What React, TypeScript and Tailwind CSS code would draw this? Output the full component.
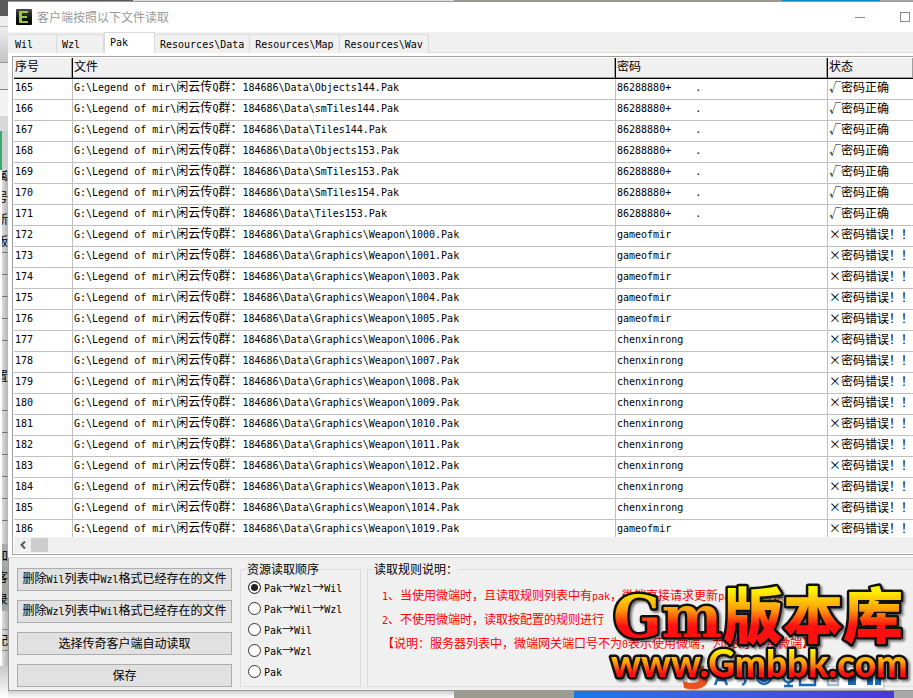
import { useState } from "react";
import clsx from "clsx";

const TABS = ["Wil", "Wzl", "Pak", "Resources\\Data", "Resources\\Map", "Resources\\Wav"];

const ORDERS = ["Pak→Wzl→Wil", "Pak→Wil→Wzl", "Pak→Wil", "Pak→Wzl", "Pak"];

const ACTIONS = [
  "删除Wil列表中Wzl格式已经存在的文件",
  "删除Wzl列表中Wil格式已经存在的文件",
  "选择传奇客户端自动读取",
  "保存",
];

const RULES = [
  "1、当使用微端时，且读取规则列表中有pak，微端直接请求更新pak，不再读",
  "2、不使用微端时，读取按配置的规则进行",
  "【说明：服务器列表中，微端网关端口号不为0表示使用微端，为0表示不用微端】",
];

const ROOT = "G:\\Legend of mir\\闲云传Q群：184686\\Data\\";

type Row = { file: string; password: string; ok: boolean };

const ROWS: Row[] = [
  ...["Objects144", "smTiles144", "Tiles144", "Objects153", "SmTiles153", "SmTiles154", "Tiles153"].map(
    (file) => ({ file, password: "86288880+    .", ok: true }),
  ),
  ...[1000, 1001, 1003, 1004, 1005].map((n) => ({
    file: `Graphics\\Weapon\\${n}`,
    password: "gameofmir",
    ok: false,
  })),
  ...[1006, 1007, 1008, 1009, 1010, 1011, 1012, 1013, 1014].map((n) => ({
    file: `Graphics\\Weapon\\${n}`,
    password: "chenxinrong",
    ok: false,
  })),
  { file: "Graphics\\Weapon\\1019", password: "gameofmir", ok: false },
];

/** 中文 12px，半角字符 10px 等宽（每字 6px），保证中英文 2:1 对齐 */
function Mixed({ children }: { children: string }) {
  const parts = children.match(/[\x20-\x7e]+|[^\x20-\x7e]+/g) ?? [];
  return (
    <>
      {parts.map((part, i) =>
        /[\x20-\x7e]/.test(part) ? (
          <span key={i} className="font-['DejaVu_Sans_Mono','Liberation_Mono',monospace] text-[10px]">
            {part}
          </span>
        ) : (
          part
        ),
      )}
    </>
  );
}

/** 左侧露出的后层窗口 */
function BackWindow() {
  const lines = "h-[22px] shrink-0 border-b border-[#777]";
  const glyph = "h-[22px] shrink-0 overflow-hidden whitespace-nowrap leading-[20px] -indent-1.5";
  return (
    <div aria-hidden="true" className="flex w-2 shrink-0 flex-col overflow-hidden bg-white">
      <div className="h-4 shrink-0 bg-[#5a5a5a]" />
      <div className="h-[11px] shrink-0 border-b border-[#bbb] bg-[#eee]" />
      <div className="h-9 shrink-0 border-b border-[#999] bg-linear-to-b from-[#eee] to-[#c4c4c4]" />
      <div className="h-[27px] shrink-0 border-b border-[#888] bg-[#e8e8e8]" />
      <div className="h-[26px] shrink-0 bg-[#f2f2f2]" />
      <div className="h-[15px] shrink-0 bg-[#d8d8d8]" />
      <div className="h-[39px] shrink-0 border-l-2 border-[#36ab70] bg-[#cfcfcf]" />
      <div className="flex min-h-0 flex-1 flex-col overflow-hidden border-l-2 border-white bg-linear-to-r from-[#dcdcdc] to-[#b4b4b4]">
        <div className="h-[83px] shrink-0 overflow-hidden border-b border-[#777]">
          <p className="-ml-1.5 h-[22px] leading-[10px]">属</p>
          <p className="-ml-1.5 h-[22px] leading-[10px]">号</p>
          <p className="-ml-1.5 h-[22px] leading-[10px]">新</p>
          <p className="-ml-1.5 h-[17px] leading-[10px]">版</p>
        </div>
        <div className={lines} />
        <div className={lines} />
        <div className={lines} />
        <div className={lines} />
        <div className="h-[24px] shrink-0" />
        <p className="-ml-1.5 h-[24px] shrink-0 leading-[22px]">置</p>
        <div className={lines} />
        <div className={lines} />
        <div className={lines} />
        <div className={lines} />
        <div className={lines} />
        <div className={lines} />
        <div className="h-[24px] shrink-0 border-b border-[#aaa]" />
        <p className={clsx(glyph, "bg-[#aaa]")}>加</p>
        <p className={clsx(glyph, "bg-[#a4a4a4]")}>客</p>
        <p className={clsx(glyph, "bg-[#a4a4a4]")}>录</p>
        <div className="h-[18px] shrink-0" />
        <p className={clsx(glyph, "border-y border-[#888]")}>配</p>
      </div>
      <div className="h-8 shrink-0 bg-linear-to-b from-[#c8c8c8] to-white" />
    </div>
  );
}

function TitleBar() {
  return (
    <header className="flex h-[30px] shrink-0 items-center bg-white pl-2">
      <svg viewBox="0 0 16 16" className="size-4" aria-hidden="true">
        <defs>
          <linearGradient id="icon-bg" x1="0" y1="0" x2="0" y2="1">
            <stop offset="0" stopColor="#4a4a4a" />
            <stop offset="0.5" stopColor="#181818" />
            <stop offset="1" stopColor="#000" />
          </linearGradient>
        </defs>
        <rect width="16" height="16" rx="1" fill="url(#icon-bg)" />
        <path d="M3 2h9v2H6v3h5v2H6v3h6v2H3z" fill="#9bcb3c" />
      </svg>
      <h1 className="ml-[5px] text-[12px] leading-[14px] text-[#999]">客户端按照以下文件读取</h1>
      <div className="ml-auto flex gap-[35px] overflow-hidden">
        <button type="button" aria-label="最小化" className="flex h-[10px] w-[10px] items-center">
          <span className="h-px w-full bg-[#888]" />
        </button>
        <button type="button" aria-label="最大化" className="mr-[3px] h-[10px] w-[10px] border border-[#888]" />
      </div>
    </header>
  );
}

function PakTable() {
  const head =
    "h-[21px] overflow-hidden border-b border-r border-black bg-[#f0f0f0] p-0 pl-px text-left align-top font-normal leading-[16px] shadow-[inset_-1px_-1px_0_#a0a0a0] last:border-r-0";
  const cell =
    "h-[21px] overflow-hidden whitespace-pre border-b border-r border-[#c0c0c0] p-0 pl-px align-top leading-[14px] last:border-r-0 last:leading-[16px]";
  return (
    <table className="w-full table-fixed border-separate border-spacing-0">
      <colgroup>
        <col className="w-[59px]" />
        <col className="w-[543px]" />
        <col className="w-[212px]" />
        <col />
      </colgroup>
      <thead>
        <tr>
          <th className={head}>序号</th>
          <th className={head}>文件</th>
          <th className={head}>密码</th>
          <th className={head}>状态</th>
        </tr>
      </thead>
      <tbody>
        {ROWS.map((row, i) => (
          <tr key={row.file}>
            <td className={cell}>
              <Mixed>{String(165 + i)}</Mixed>
            </td>
            <td className={cell}>
              <Mixed>{`${ROOT}${row.file}.Pak`}</Mixed>
            </td>
            <td className={cell}>
              <Mixed>{row.password}</Mixed>
            </td>
            <td className={cell}>{row.ok ? "√密码正确" : "×密码错误！！"}</td>
          </tr>
        ))}
      </tbody>
    </table>
  );
}

/** 输入法悬浮条 */
function ImeBar() {
  return (
    <svg
      aria-hidden="true"
      viewBox="0 0 206 28"
      className="absolute right-[28px] bottom-[7px] h-7 w-[206px]"
    >
      <path d="M8 4h197v22H8z" fill="#fff" stroke="#b5b5b5" />
      <path d="M25 3C12 1 4 5 5 10c1 4 15 3 15 7 0 3-9 4-16 1l1 7c10 3 23 1 24-8 0-6-13-6-14-9 0-2 6-2 10 0z" fill="#e8531f" />
      <g fill="none" stroke="#1c6cb5" strokeWidth="2.5">
        <path d="M36 22l6-15 6 15M38 17h8M64 14c4 3 3 6-1 8" />
        <circle cx="85" cy="14" r="7" />
        <path d="M81 15c2 4 6 4 8 0M104 13c0 8 11 8 11 0M109.500 18v5M105 23h9M121 10h15v12h-15z" />
        <path d="M149 10h10v12h-10zM152 14h5M152 18h5" stroke="#a9bccd" />
      </g>
      <path d="M169 8h8v14h-8zM188 10h6v12h-6zM196 10h6v12h-6z" fill="#1c6cb5" />
    </svg>
  );
}

/** 描边先画，渐变填充压在上面 */
function Watermark() {
  return (
    <svg viewBox="0 0 308 116" className="absolute right-0 bottom-0 h-[116px] w-[308px] overflow-visible">
      <defs>
        <linearGradient id="fire-top" gradientUnits="userSpaceOnUse" x1="0" y1="6" x2="0" y2="60">
          <stop offset="0.05" stopColor="#fff200" />
          <stop offset="0.4" stopColor="#ff9d0a" />
          <stop offset="0.7" stopColor="#ff1010" />
        </linearGradient>
        <linearGradient id="fire-bottom" gradientUnits="userSpaceOnUse" x1="0" y1="67" x2="0" y2="97">
          <stop offset="0.05" stopColor="#fff200" />
          <stop offset="0.45" stopColor="#ff9d0a" />
          <stop offset="0.8" stopColor="#ff1010" />
        </linearGradient>
      </defs>
      <g
        stroke="#111"
        strokeWidth="5"
        strokeLinejoin="round"
        className="drop-shadow-[2px_2px_1px_rgba(0,0,0,0.5)] [paint-order:stroke]"
      >
        <text x="8" y="55" fontSize="57" fill="url(#fire-top)" className="font-['DejaVu_Serif',serif] font-bold">
          Gm
        </text>
        <text x="118" y="56" fontSize="60" fill="url(#fire-top)" className="font-['Noto_Sans_CJK_SC',sans-serif] font-black">
          版本库
        </text>
        <text x="6" y="95" fontSize="37" fill="url(#fire-bottom)" className="font-['Lato',sans-serif] font-black">
          www.Gmbbk.com
        </text>
      </g>
    </svg>
  );
}

export default function App() {
  const [tab, setTab] = useState("Pak");
  const [order, setOrder] = useState(ORDERS[0]);

  return (
    <div className="relative flex h-screen overflow-hidden bg-white font-['Noto_Sans_CJK_SC',sans-serif] text-[12px] text-black">
      <BackWindow />
      <div className="flex min-w-0 flex-1 flex-col">
        <div aria-hidden="true" className="flex h-[2px] shrink-0 border-b border-[#999]">
          <div className="w-[125px] bg-[#5a5a5a]" />
          <div className="w-[321px] bg-[#e0e0e0]" />
          <div className="flex-1 bg-[#99998f]" />
          <div className="w-[98px] bg-[#0a8ac4]" />
          <div className="w-[33px] bg-[#aaa]" />
        </div>
        <TitleBar />

        <div role="tablist" className="flex h-[21px] shrink-0 items-end bg-[#f0f0f0] pl-[2px]">
          {TABS.map((name) => (
            <button
              key={name}
              type="button"
              role="tab"
              aria-selected={tab === name}
              onClick={() => setTab(name)}
              className={clsx(
                "flex border-[#d9d9d9] px-[5px] text-left leading-[19px]",
                name.length < 4 && "w-[47px]",
                tab === name ? "h-[21px] w-[51px] border-x border-t bg-white" : "h-[19px] border-t border-r bg-[#f0f0f0]",
              )}
            >
              <Mixed>{name}</Mixed>
            </button>
          ))}
          <div className="h-px flex-1 bg-[#d9d9d9]" />
        </div>

        <main className="flex min-h-0 flex-1 flex-col border-b border-[#d9d9d9] bg-white pt-[3px] pb-[2px] pl-1">
          <div className="flex min-h-0 flex-1 flex-col border-y border-l border-[#a0a0a0] pt-px pb-px pl-px">
            <div className="min-h-0 flex-1 overflow-hidden">
              <PakTable />
            </div>
            <div className="flex h-4 shrink-0 bg-[#f0f0f0]">
              <button type="button" aria-label="向左滚动" className="flex w-[17px] items-center justify-center">
                <svg viewBox="0 0 8 8" className="size-2" aria-hidden="true">
                  <path d="M6 0.500L2.500 4L6 7.500" fill="none" stroke="#555" strokeWidth="2" />
                </svg>
              </button>
              <div className="my-px w-[17px] bg-[#cdcdcd]" />
            </div>
          </div>
        </main>

        <footer className="flex shrink-0 border-b border-l border-[#999] bg-[#f0f0f0] pl-2">
          <div className="flex w-[215px] shrink-0 flex-col gap-[9px] pt-[10px] pb-[3px]">
            {ACTIONS.map((label) => (
              <button
                key={label}
                type="button"
                className="h-[23px] border border-[#adadad] bg-[#e1e1e1] pb-[2px] text-center leading-[18px] whitespace-nowrap"
              >
                <Mixed>{label}</Mixed>
              </button>
            ))}
          </div>

          <fieldset className="mt-[5px] mb-[3px] ml-2 w-[121px] shrink-0 border border-[#dcdcdc] px-[6px]">
            <legend className="leading-3">资源读取顺序</legend>
            <div className="flex flex-col pt-[2px] pl-px">
              {ORDERS.map((name) => (
                <label key={name} className="flex h-[21px] items-center gap-[3px]">
                  <input
                    type="radio"
                    name="order"
                    checked={order === name}
                    onChange={() => setOrder(name)}
                    className="size-[13px] shrink-0 appearance-none rounded-full border border-[#333] bg-white checked:bg-[#222] checked:shadow-[inset_0_0_0_2px_#fff]"
                  />
                  <span className="leading-4 whitespace-nowrap">
                    <Mixed>{name}</Mixed>
                  </span>
                </label>
              ))}
            </div>
          </fieldset>

          <fieldset className="mt-[5px] mb-[3px] ml-[6px] min-w-0 flex-1 border-y border-l border-[#dcdcdc] px-[6px]">
            <legend className="leading-3">读取规则说明：</legend>
            <div className="overflow-hidden pt-2 pl-2 leading-6 whitespace-nowrap text-[#f00]">
              {RULES.map((rule) => (
                <p key={rule} className="h-6">
                  <Mixed>{rule}</Mixed>
                </p>
              ))}
            </div>
          </fieldset>
        </footer>

        <div aria-hidden="true" className="flex h-[7px] shrink-0">
          <div className="w-[446px] bg-linear-to-b from-[#d0d0d0] to-white" />
          <div className="w-[120px] bg-[#9c9c92]" />
          <div className="flex-1 bg-linear-to-r from-[#1677e6] to-[#4a38d8]" />
          <div className="w-[19px] bg-[#a8a8a8]" />
        </div>
      </div>
      <ImeBar />
      <Watermark />
    </div>
  );
}
